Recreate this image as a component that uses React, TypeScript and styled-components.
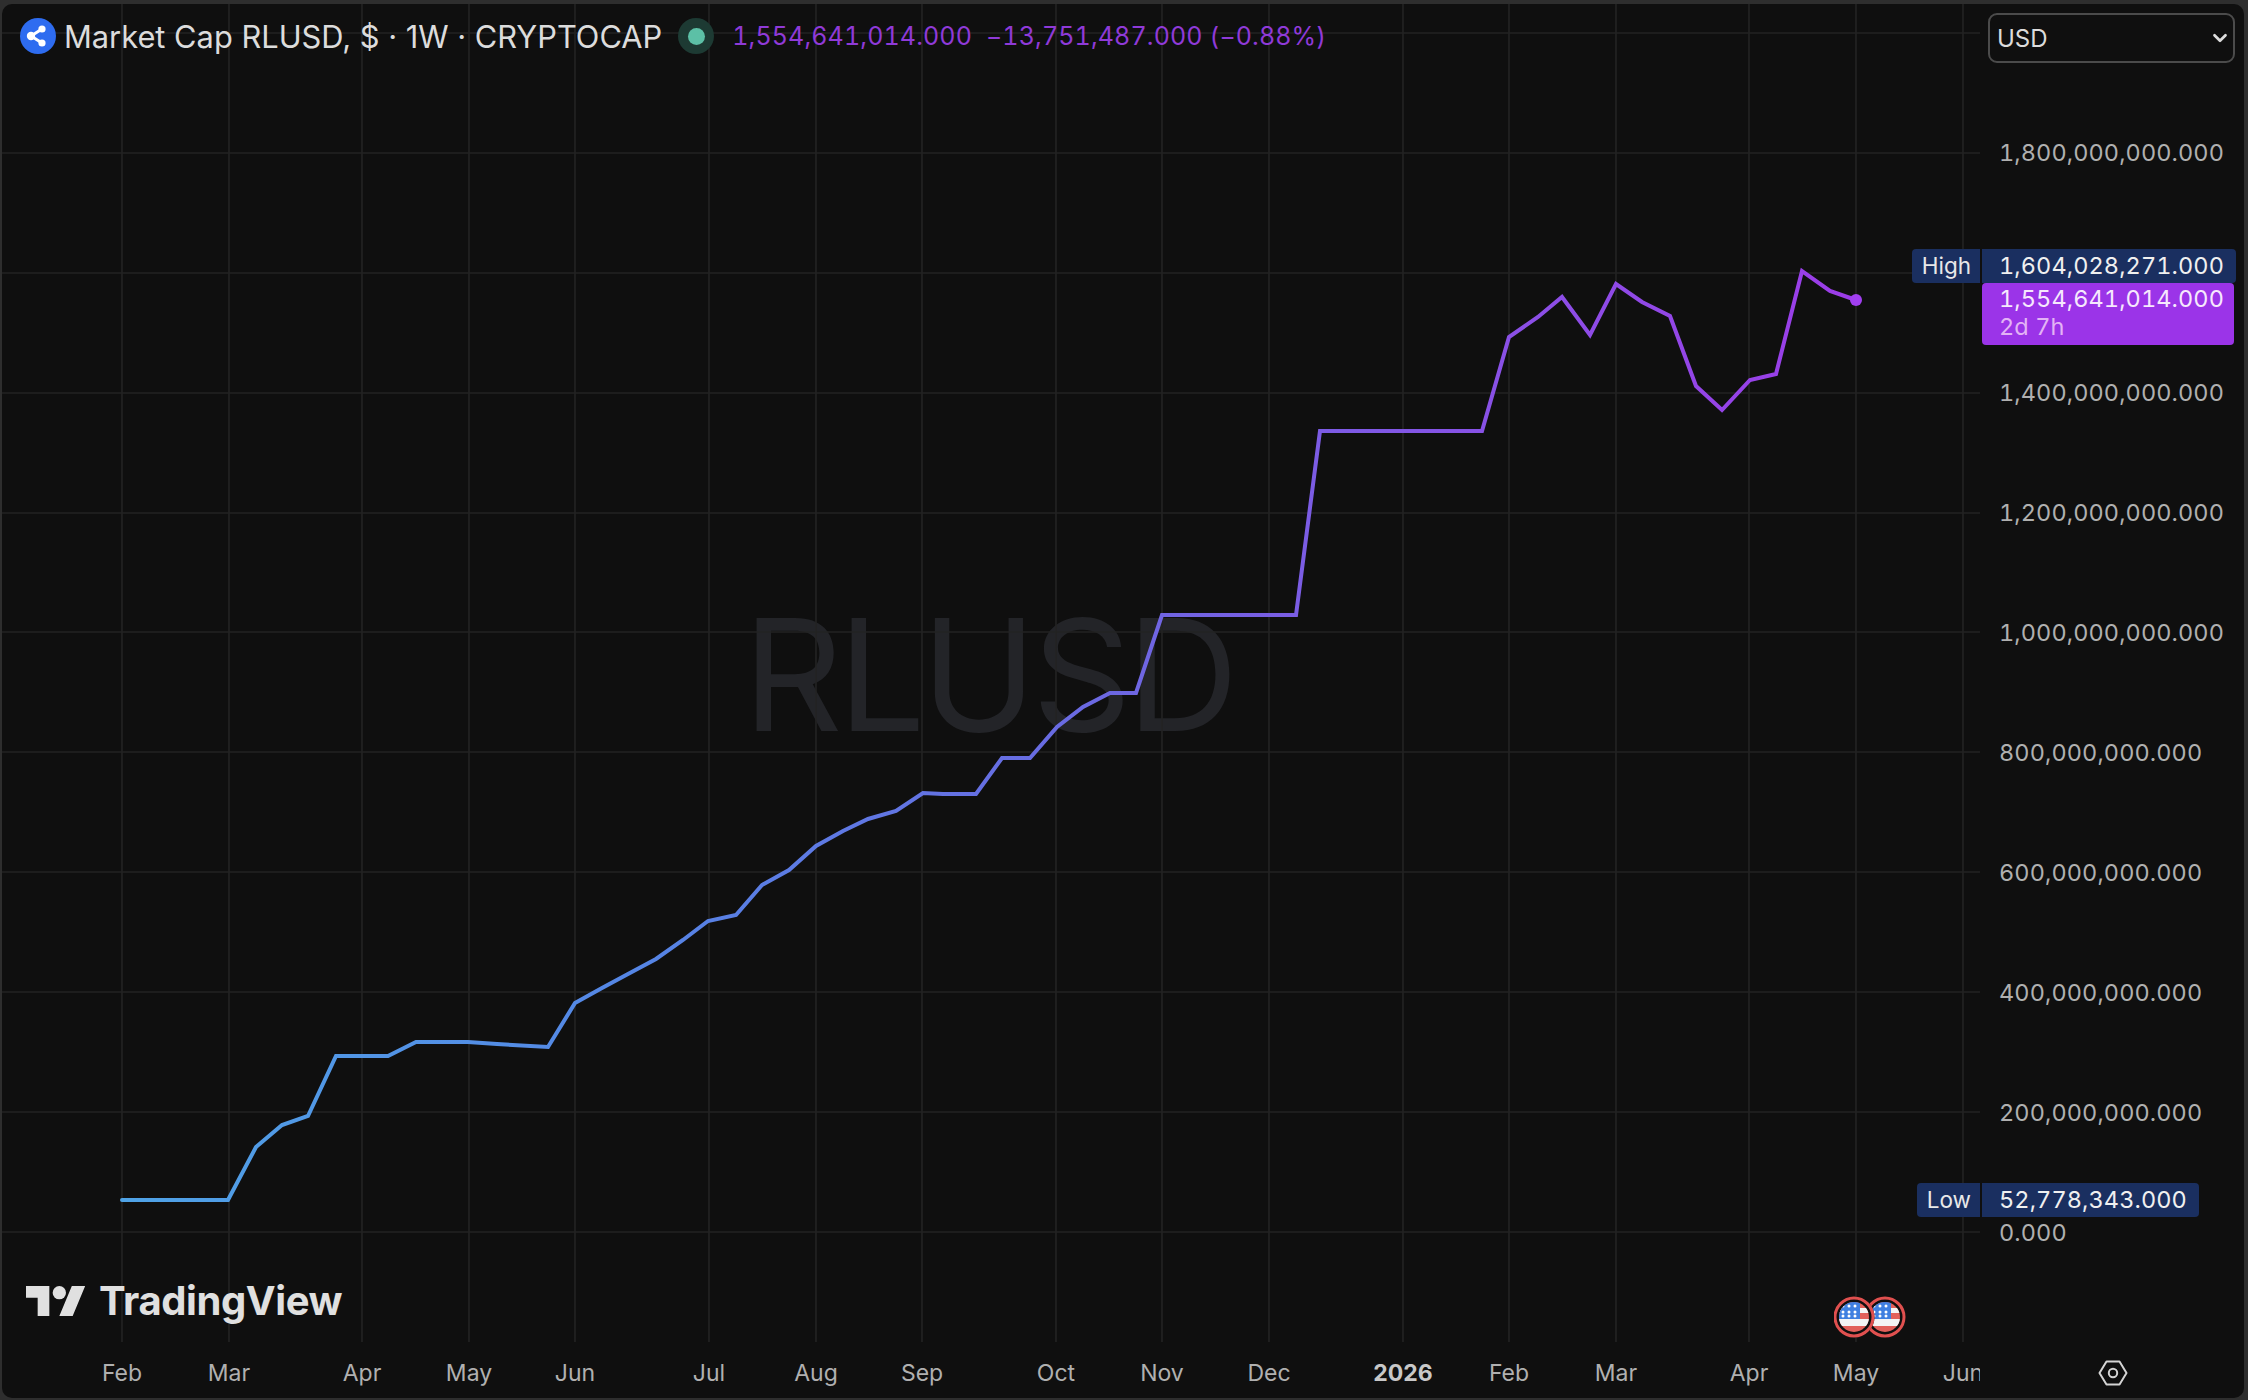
import React from "react";
import styled, { createGlobalStyle } from "styled-components";
import { ChevronDown } from "lucide-react";

const GlobalStyle = createGlobalStyle`
  html, body {
    margin: 0;
    padding: 0;
    background: #2e2e2e;
  }
  * {
    box-sizing: border-box;
  }
`;

const linePoints = [
  [122, 1200], [228, 1200], [256, 1147], [282, 1125], [308, 1116], [336, 1056], [388, 1056],
  [416, 1042], [468, 1042], [497, 1044], [548, 1047], [575, 1003], [602, 988], [628, 974],
  [656, 959], [683, 940], [708, 921], [736, 915], [762, 885], [789, 870], [816, 846],
  [843, 831], [868, 819], [896, 811], [923, 793], [943, 794], [976, 794], [1002, 758],
  [1030, 758], [1057, 727], [1083, 707], [1110, 693], [1136, 693], [1162, 615], [1296, 615],
  [1320, 431], [1403, 431], [1482, 431], [1509, 337], [1538, 317], [1562, 297], [1590, 335],
  [1616, 284], [1642, 302], [1670, 316], [1696, 386], [1722, 410], [1750, 380], [1776, 374],
  [1802, 271], [1830, 291], [1856, 300],
];

const timeTicks = [
  { x: 122, label: "Feb" }, { x: 229, label: "Mar" }, { x: 362, label: "Apr" }, { x: 469, label: "May" },
  { x: 575, label: "Jun" }, { x: 709, label: "Jul" }, { x: 816, label: "Aug" }, { x: 922, label: "Sep" },
  { x: 1056, label: "Oct" }, { x: 1162, label: "Nov" }, { x: 1269, label: "Dec" }, { x: 1403, label: "2026", strong: true },
  { x: 1509, label: "Feb" }, { x: 1616, label: "Mar" }, { x: 1749, label: "Apr" }, { x: 1856, label: "May" },
  { x: 1963, label: "Jun" },
];

const priceTicks = [
  "1,800,000,000.000", "", "1,400,000,000.000", "1,200,000,000.000", "1,000,000,000.000",
  "800,000,000.000", "600,000,000.000", "400,000,000.000", "200,000,000.000", "0.000",
];

const gridRows = [33, 153, 273, 393, 513, 632, 752, 872, 992, 1112, 1232];

const Frame = styled.div`
  width: 2248px;
  height: 1400px;
  padding: 4px 4px 2px 2px;
  background: #2e2e2e;
  font-family: Inter, "Liberation Sans", sans-serif;
  overflow: hidden;
`;

const Panel = styled.div`
  height: 100%;
  display: flex;
  flex-direction: column;
  background: #0f0f0f;
  border-radius: 10px;
  overflow: hidden;
`;

const ChartRow = styled.div`
  display: flex;
  height: 1338px;
`;

const Plot = styled.div`
  position: relative;
  width: 1978px;
  height: 100%;
`;

const ChartSvg = styled.svg`
  position: absolute;
  inset: 0;
`;

const Watermark = styled.div`
  position: absolute;
  inset: 0;
  display: flex;
  align-items: center;
  justify-content: center;
  padding: 2px 5px 0 0;
  font-size: 155px;
  font-weight: 400;
  letter-spacing: -4.6px;
  color: #232428;
`;

const Legend = styled.div`
  position: absolute;
  top: 14px;
  left: 18px;
  display: flex;
  align-items: center;
  height: 36px;
`;

const CoinBadge = styled.svg`
  width: 36px;
  height: 36px;
  margin-right: 8px;
`;

const Title = styled.span`
  font-size: 30.8px;
  color: #dcdcdc;
  white-space: nowrap;
`;

const StatusDot = styled.span`
  display: flex;
  align-items: center;
  justify-content: center;
  width: 36px;
  height: 36px;
  margin: 0 18px 0 16px;
  border-radius: 50%;
  background: #1d3a33;

  &::after {
    content: "";
    width: 17px;
    height: 17px;
    border-radius: 50%;
    background: #5cc0a6;
  }
`;

const LegendValue = styled.span<{ $gap?: number }>`
  margin-left: ${(p) => p.$gap ?? 0}px;
  font-size: 25px;
  font-variant-numeric: tabular-nums;
  letter-spacing: 0.13px;
  color: #8f3ad8;
  white-space: nowrap;
`;

const LogoMark = styled.div`
  position: absolute;
  left: 24px;
  bottom: 13px;
  display: flex;
  align-items: flex-start;
  gap: 13px;
  height: 44px;
`;

const LogoIcon = styled.svg`
  width: 60px;
  height: 30px;
  margin-top: 1px;
  fill: #e0e0e0;
`;

const LogoText = styled.span`
  font-size: 40px;
  line-height: 32px;
  font-weight: 700;
  letter-spacing: -0.4px;
  color: #e0e0e0;
`;

const EventFlags = styled.svg`
  position: absolute;
  left: 1832px;
  top: 1292px;
  width: 74px;
  height: 42px;
`;

const PriceScale = styled.div`
  position: relative;
  width: 264px;
  padding-top: 9px;
  font-variant-numeric: tabular-nums;
`;

const CurrencySelect = styled.div`
  display: flex;
  align-items: center;
  justify-content: space-between;
  width: 247px;
  height: 50px;
  margin: 0 0 29px 8px;
  padding: 0 2px 0 7px;
  border: 2px solid #4b4b4b;
  border-radius: 9px;
  font-size: 24px;
  color: #dcdcdc;
`;

const PriceTick = styled.div`
  display: flex;
  align-items: center;
  height: 120px;
  padding-left: 19px;
  font-size: 23.5px;
  letter-spacing: 0.1px;
  color: #b0b0b0;
`;

const Tag = styled.div<{ $top: number }>`
  position: absolute;
  left: 2px;
  top: ${(p) => p.$top}px;
`;

const TagLabel = styled.div`
  position: absolute;
  top: 0;
  right: 100%;
  display: flex;
  align-items: center;
  height: 34px;
  margin-right: 2px;
  padding: 0 9px 2px 10px;
  border-radius: 4px 0 0 4px;
  background: #1a2f60;
  font-size: 22.5px;
  color: #e8e8e8;
`;

const TagValue = styled.div`
  display: flex;
  align-items: center;
  height: 34px;
  padding: 0 12px 2px 17px;
  border-radius: 0 4px 4px 0;
  background: #1a2f60;
  font-size: 23.5px;
  letter-spacing: 0.1px;
  color: #f0f0f0;
  white-space: nowrap;
`;

const LastPrice = styled.div`
  width: 252px;
  height: 62px;
  padding: 2px 12px 0 17px;
  border-radius: 4px;
  background: #9b34e8;
  font-size: 23.5px;
  line-height: 28px;
  letter-spacing: 0.1px;
  color: #f6e8fd;
`;

const Countdown = styled.div`
  color: #e3b3f5;
`;

const BottomRow = styled.div`
  flex: 1;
  display: flex;
`;

const TimeScale = styled.div`
  display: flex;
  width: 1978px;
  padding: 17px 0 0 120px;
  overflow: hidden;
`;

const TimeTick = styled.div`
  flex: none;
`;

const TimeLabel = styled.span<{ $strong?: boolean }>`
  display: block;
  width: fit-content;
  transform: translateX(-50%);
  font-size: 23px;
  font-weight: ${(p) => (p.$strong ? 700 : 400)};
  color: ${(p) => (p.$strong ? "#c8c8c8" : "#b0b0b0")};
`;

const SettingsCorner = styled.div`
  flex: 1;
  display: flex;
  align-items: center;
  justify-content: center;
  padding: 5px 0 0 2px;
`;

const UsFlag = ({ x }: { x: number }) => (
  <g transform={`translate(${x} 21)`}>
    <circle r="20.5" fill="#0f0f0f" />
    <circle r="19" fill="none" stroke="#e0504f" strokeWidth="3" />
    <g clipPath="url(#flag-clip)">
      <rect x="-17" y="-17" width="34" height="34" fill="#e2605a" />
      <rect x="-17" y="-9" width="34" height="5" fill="#f4f4f4" />
      <rect x="-17" y="2" width="34" height="7" fill="#f4f4f4" />
      <rect x="-15" y="-17" width="21" height="19" fill="#3f7fe0" />
      {[-11, -5, 1].map((cx) =>
        [-11, -5, -1].map((cy) => <circle key={`${cx}${cy}`} cx={cx} cy={cy} r="1.5" fill="#fff" />)
      )}
    </g>
  </g>
);

export default function App() {
  const path = linePoints.map(([x, y]) => `${x},${y}`).join(" ");
  return (
    <Frame>
      <GlobalStyle />
      <Panel>
        <ChartRow>
          <Plot>
            <Watermark>RLUSD</Watermark>
            <ChartSvg viewBox="2 4 1978 1338" width="1978" height="1338">
              <defs>
                <linearGradient id="line-fade" gradientUnits="userSpaceOnUse" x1="122" y1="0" x2="1856" y2="0">
                  <stop offset="0" stopColor="#4fa3e6" />
                  <stop offset="0.3" stopColor="#5585e5" />
                  <stop offset="0.55" stopColor="#6a6ae2" />
                  <stop offset="0.8" stopColor="#8a50e6" />
                  <stop offset="1" stopColor="#9c3ce8" />
                </linearGradient>
              </defs>
              {gridRows.map((y) => (
                <line key={y} x1="2" x2="1980" y1={y} y2={y} stroke="#232323" strokeWidth="1.6" />
              ))}
              {timeTicks.map((t) => (
                <line key={t.x} x1={t.x} x2={t.x} y1="4" y2="1342" stroke="#232323" strokeWidth="1.6" />
              ))}
              <polyline
                points={path}
                fill="none"
                stroke="url(#line-fade)"
                strokeWidth="4"
                strokeLinejoin="miter"
                strokeLinecap="round"
              />
              <circle cx="1856" cy="300" r="6" fill="#a13ff0" />
            </ChartSvg>
            <Legend>
              <CoinBadge viewBox="0 0 36 36">
                <circle cx="18" cy="18" r="18" fill="#2e6cf0" />
                <path d="M11 18 22 11M11 18 22 25" stroke="#fff" strokeWidth="3" fill="none" />
                <circle cx="11" cy="18" r="4.2" fill="#fff" />
                <circle cx="22" cy="11" r="3.6" fill="#fff" />
                <circle cx="22" cy="25" r="3.6" fill="#fff" />
              </CoinBadge>
              <Title>Market Cap RLUSD, $ · 1W · CRYPTOCAP</Title>
              <StatusDot />
              <LegendValue>1,554,641,014.000</LegendValue>
              <LegendValue $gap={14}>−13,751,487.000 (−0.88%)</LegendValue>
            </Legend>
            <LogoMark>
              <LogoIcon viewBox="0 4 36 18">
                <path d="M14 22H7V11H0V4h14v18zM28 22h-8l7.5-18h8L28 22z" />
                <circle cx="20" cy="8" r="4" />
              </LogoIcon>
              <LogoText>TradingView</LogoText>
            </LogoMark>
            <EventFlags viewBox="0 0 74 42">
              <defs>
                <clipPath id="flag-clip">
                  <circle r="15" />
                </clipPath>
              </defs>
              <UsFlag x={51} />
              <UsFlag x={20} />
            </EventFlags>
          </Plot>
          <PriceScale>
            <CurrencySelect>
              USD
              <ChevronDown size={22} strokeWidth={3} color="#dcdcdc" />
            </CurrencySelect>
            {priceTicks.map((label, i) => (
              <PriceTick key={i}>{label}</PriceTick>
            ))}
            <Tag $top={245}>
              <TagLabel>High</TagLabel>
              <TagValue>1,604,028,271.000</TagValue>
            </Tag>
            <Tag $top={279}>
              <LastPrice>
                1,554,641,014.000
                <Countdown>2d 7h</Countdown>
              </LastPrice>
            </Tag>
            <Tag $top={1179}>
              <TagLabel>Low</TagLabel>
              <TagValue>52,778,343.000</TagValue>
            </Tag>
          </PriceScale>
        </ChartRow>
        <BottomRow>
          <TimeScale>
            {timeTicks.map((t, i) => (
              <TimeTick
                key={t.x}
                style={{ width: (timeTicks[i + 1]?.x ?? t.x + 100) - t.x }}
              >
                <TimeLabel $strong={t.strong}>{t.label}</TimeLabel>
              </TimeTick>
            ))}
          </TimeScale>
          <SettingsCorner>
            <svg width="30" height="26" viewBox="0 0 30 26" fill="none" stroke="#d4d4d4" strokeWidth="2">
              <path d="M8.5 1.5h13L28.5 13l-7 11.500h-13L1.500 13z" strokeLinejoin="round" />
              <circle cx="15" cy="13" r="4.200" />
            </svg>
          </SettingsCorner>
        </BottomRow>
      </Panel>
    </Frame>
  );
}
